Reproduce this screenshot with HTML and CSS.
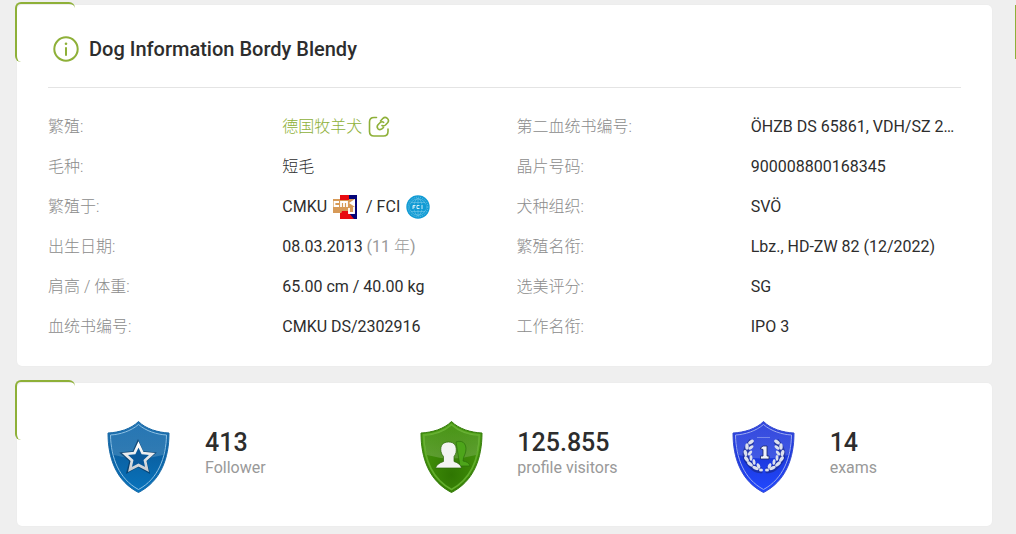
FILE: index.html
```html
<!DOCTYPE html>
<html lang="zh">
<head>
<meta charset="utf-8">
<meta name="viewport" content="width=device-width, initial-scale=1">
<title>Dog Information Bordy Blendy</title>
<link rel="stylesheet" href="styles.css">
</head>
<body>
<div class="page">
  <main class="main">
    <section class="card info">
      <header class="info-head">
        <svg class="info-icon" viewBox="0 0 26 26" aria-hidden="true">
          <circle cx="13" cy="13" r="11.7" fill="none" stroke="#8eb038" stroke-width="2"/>
          <circle cx="13" cy="7.8" r="1.3" fill="#8eb038"/>
          <path d="M13 12v7" stroke="#8eb038" stroke-width="2" stroke-linecap="round"/>
        </svg>
        <h1 class="title">Dog Information Bordy Blendy</h1>
      </header>
      <dl class="facts">
        <dt>繁殖:</dt>
        <dd><a class="breed" href="#breed">德国牧羊犬
          <svg class="link-icon" viewBox="0 0 22 22" fill="none" stroke="#8eb038" stroke-width="1.6" stroke-linecap="round" aria-hidden="true">
            <path d="M8.500 1.500H6Q1.500 1.500 1.500 6V15.500Q1.500 20 6 20H15.500Q20 20 20 15.500V13"/>
            <path d="M12.500 5L15 2.300Q17 .5 19.300 2.300Q21.500 4.500 19.600 6.800L17.500 9Q15.800 10.500 14 9.500"/>
            <path d="M15.700 6.300Q13.800 5 12 6.800L10 8.800Q8.300 11 10 12.800Q12 14.500 14.200 12.700L15.500 11.500"/>
          </svg></a></dd>
        <dt>第二血统书编号:</dt>
        <dd>ÖHZB DS 65861, VDH/SZ 2…</dd>
        <dt>毛种:</dt>
        <dd class="light">短毛</dd>
        <dt>晶片号码:</dt>
        <dd>900008800168345</dd>
        <dt>繁殖于:</dt>
        <dd class="clubs"><span>CMKU</span>
          <svg class="club-logo" viewBox="0 0 24 24" role="img" aria-label="CMKU">
            <path fill="#e80b10" d="M7 0H16V24H7z"/>
            <path fill="#050578" d="M16 0H24V24H20L16 19z"/>
            <path fill="#e80b10" d="M7 18H16L21 24H7z"/>
            <path fill="#d79a58" d="M0 4H22V18H0z"/>
            <path fill="#050578" d="M22 0H24V20H22z"/>
            <path fill="#fff" d="M22 4V12L16 8z"/>
            <path fill="none" stroke="#fff" stroke-width="1.800" d="M6 7H1.500V11H6M8 12V7H14V12M11 7V12M16 13V18H21V12"/>
            <path fill="#e80b10" d="M7 4H16V5H7zM9 16H15V19H8z"/>
          </svg>
          <span>/ FCI</span>
          <svg class="club-logo" viewBox="0 0 24 24" role="img" aria-label="FCI">
            <circle cx="12" cy="12" r="11.700" fill="#119bd4"/>
            <circle cx="12" cy="12" r="9.800" fill="none" stroke="#9bd7ee" stroke-width=".6" stroke-dasharray="1 1"/>
            <g fill="none" stroke="#76c8e8" stroke-width=".600">
              <ellipse cx="12" cy="12" rx="4" ry="8.500"/>
              <circle cx="12" cy="12" r="8.200"/>
              <path d="M12 3.500V20.500M5 7.500H19M5 16.500H19"/>
            </g>
            <path fill="#119bd4" d="M4 9.300H20V14.700H4z"/>
            <path fill="none" stroke="#e9f7fc" stroke-width=".9" d="M7 14V10.500H9.500M7 12H9M13.500 10.500H11V13.500H13.500M16 10V14"/>
          </svg></dd>
        <dt>犬种组织:</dt>
        <dd>SVÖ</dd>
        <dt>出生日期:</dt>
        <dd>08.03.2013 <span class="muted">(11 <span class="light">年</span>)</span></dd>
        <dt>繁殖名衔:</dt>
        <dd>Lbz., HD-ZW 82 (12/2022)</dd>
        <dt>肩高 / 体重:</dt>
        <dd>65.00 cm / 40.00 kg</dd>
        <dt>选美评分:</dt>
        <dd>SG</dd>
        <dt>血统书编号:</dt>
        <dd>CMKU DS/2302916</dd>
        <dt>工作名衔:</dt>
        <dd>IPO 3</dd>
      </dl>
    </section>

    <section class="card stats">
      <div class="stat">
        <svg class="shield" viewBox="0 0 64 72" aria-hidden="true">
          <defs>
            <linearGradient id="blue" x2="0" y2="1"><stop stop-color="#2374b3"/><stop offset=".5" stop-color="#0a62a4"/><stop offset="1" stop-color="#0874bd"/></linearGradient>
            <linearGradient id="gloss" x2="0" y2="1"><stop stop-color="#fff" stop-opacity=".03"/><stop offset="1" stop-color="#fff" stop-opacity=".17"/></linearGradient>
            <linearGradient id="silver" x2="0" y2="1"><stop stop-color="#fff"/><stop offset="1" stop-color="#c9cdd2"/></linearGradient>
            <path id="outline" d="M31.500 .5C24 8 12 11.500 1 12C1 37 9 60 31.500 71.500C54 60 62 37 62 12C51 11.500 39 8 31.500 .5Z"/>
            <path id="rim" d="M31.500 3.500C24 10 13 13.500 3.500 14C4 37 12 58 31.500 68.500C51 58 59 37 59.500 14C50 13.500 39 10 31.500 3.500Z"/>
            <path id="shine" d="M31.500 4C24 10 13 14 4 14.500Q4 25 7 34Q31 41 56 34Q59 25 59 14.500C50 14 39 10 31.500 4Z"/>
          </defs>
          <use href="#outline" fill="url(#blue)" stroke="#1869a7"/>
          <use href="#shine" fill="url(#gloss)"/>
          <use href="#rim" fill="none" stroke="#8fc1e3" stroke-width="1"/>
          <path d="M31 23L35 32 45 33 37.500 39.500 40 49 31 44 22 49 24.500 39.500 17 33 27 32Z" fill="#073d6b" stroke="#062c50" stroke-width="4" opacity=".6"/>
          <path d="M31.500 23.500L35.500 32 45 33 38 39.500 40 48.500 31.500 44 23 48.500 25 39.500 18 33 27.500 32Z" fill="#09589a" stroke="url(#silver)" stroke-width="2.700"/>
        </svg>
        <div class="stat-text">
          <strong class="value">413</strong>
          <span class="caption">Follower</span>
        </div>
      </div>
      <div class="stat">
        <svg class="shield" viewBox="0 0 64 72" aria-hidden="true">
          <defs>
            <radialGradient id="green" cy=".75" r=".75"><stop stop-color="#2f7602"/><stop offset=".55" stop-color="#3e8b08"/><stop offset="1" stop-color="#459411"/></radialGradient>
          </defs>
          <g transform="translate(1 0)">
            <use href="#outline" fill="url(#green)" stroke="#377e0d"/>
            <use href="#rim" fill="none" stroke="#61ad2b" stroke-width="1.800"/>
            <use href="#shine" fill="url(#gloss)"/>
            <path d="M36 21C44 18 48 25 45 33Q43 37 43 40Q49 41 50 45H40Z" fill="#4da51a" stroke="#2d700b" stroke-width=".7"/>
            <path d="M28.500 21C35 21 37 25.500 36 31.500Q35.500 33.500 34 35.500V40.500Q40.500 42.500 41.500 47H15.500Q17 42.500 23.500 40.500V35.500Q21.500 33.500 21 30.500C20 24.500 23 21 28.500 21Z" fill="#f3f4f2" stroke="#2d650c" stroke-width=".7"/>
          </g>
        </svg>
        <div class="stat-text">
          <strong class="value">125.855</strong>
          <span class="caption">profile visitors</span>
        </div>
      </div>
      <div class="stat">
        <svg class="shield" viewBox="0 0 64 72" aria-hidden="true">
          <defs>
            <linearGradient id="royal" x2="0" y2="1"><stop stop-color="#3145dd"/><stop offset=".5" stop-color="#1c39de"/><stop offset="1" stop-color="#2249ff"/></linearGradient>
            <g id="laurel">
              <path d="M20 20Q8 34 19 44Q24 50 30 49" fill="none" stroke="#152375" stroke-width="6" opacity=".55"/>
              <g fill="#dce1ee">
                <ellipse cx="19" cy="21" rx="3.200" ry="1.700" transform="rotate(-35 19 21)"/>
                <ellipse cx="15" cy="25.500" rx="1.700" ry="3.200"/>
                <ellipse cx="19" cy="26.500" rx="2.900" ry="1.500" transform="rotate(-35 19 26.500)"/>
                <ellipse cx="13.500" cy="32" rx="1.700" ry="3.200" transform="rotate(-15 13.500 32)"/>
                <ellipse cx="18" cy="32" rx="2.900" ry="1.500" transform="rotate(-50 18 32)"/>
                <ellipse cx="14.500" cy="38" rx="1.700" ry="3.200" transform="rotate(-35 14.500 38)"/>
                <ellipse cx="19" cy="37" rx="1.500" ry="2.900"/>
                <ellipse cx="18" cy="43" rx="1.700" ry="3.400" transform="rotate(-50 18 43)"/>
                <ellipse cx="22" cy="41" rx="1.500" ry="2.900" transform="rotate(-10 22 41)"/>
                <ellipse cx="23.500" cy="47" rx="3.400" ry="1.600" transform="rotate(25 23.500 47)"/>
                <ellipse cx="26.500" cy="45" rx="1.600" ry="2.900" transform="rotate(-25 26.500 45)"/>
                <ellipse cx="29" cy="49" rx="2" ry="1.500"/>
              </g>
            </g>
          </defs>
          <use href="#outline" fill="url(#royal)" stroke="#354bd0"/>
          <use href="#shine" fill="url(#gloss)"/>
          <use href="#rim" fill="none" stroke="#9caaf0" stroke-width="1"/>
          <use href="#laurel"/>
          <use href="#laurel" transform="translate(64 0) scale(-1 1)"/>
          <path d="M25 16.500H38" stroke="#8796ee" stroke-width=".8"/>
          <path d="M28 27.500L31 25H35V35H37V38H28.500V35H31V28.500Z" fill="#f0f2fa" stroke="#172365" stroke-width=".8"/>
        </svg>
        <div class="stat-text">
          <strong class="value">14</strong>
          <span class="caption">exams</span>
        </div>
      </div>
    </section>
  </main>
  <aside class="side"></aside>
</div>
</body>
</html>
```
FILE: styles.css
```css
* {
  box-sizing: border-box;
}

body {
  margin: 0;
  background: #efefef;
  color: #2d2d2d;
  font: 400 16px/24px Roboto, "Noto Sans CJK SC", sans-serif;
}

.page {
  display: flex;
  gap: 24px;
  padding: 5px 0 8px 17px;
  overflow: hidden;
}

.main {
  flex: 1;
  min-width: 0;
  display: grid;
  gap: 17px;
}

.card {
  position: relative;
  background: #fff;
  border-radius: 5px;
  box-shadow: 0 0 2px rgba(0, 0, 0, 0.04);
}

.card::before,
.side::before {
  content: "";
  position: absolute;
  top: -3px;
  left: -2px;
  width: 58px;
  height: 58px;
  border: solid #8eb038;
  border-width: 2px 0 0 2px;
  border-radius: 6px;
  pointer-events: none;
}

.side {
  position: relative;
  width: 0;
}

.side::before {
  top: 0;
  left: -1px;
  height: 54px;
  border-top: 0;
  border-radius: 0;
}

.info {
  padding: 31px 19px 27px;
}

.info-head {
  display: flex;
  align-items: center;
  gap: 10px;
  margin: 0 12px 27px;
  padding: 0 0 25px 5px;
  border-bottom: 1px solid #e4e4e4;
}

.info-icon {
  width: 26px;
  height: 26px;
}

.title {
  margin: 0;
  font-size: 20px;
  line-height: 26px;
  font-weight: 500;
}

.facts {
  display: grid;
  grid-template-columns: repeat(4, minmax(0, 1fr));
  row-gap: 16px;
  margin: 0;
}

.facts dt,
.facts dd {
  height: 24px;
  margin: 0;
  padding: 0 0 0 12px;
  overflow: hidden;
  white-space: nowrap;
  text-overflow: ellipsis;
}

.facts dt,
.muted,
.caption {
  color: #999;
}

.facts dt {
  color: #8c8c8c;
}

.facts dt,
.light,
.breed {
  font-weight: 300;
}

.facts .clubs,
.breed {
  display: flex;
  align-items: center;
  gap: 6px;
}

.club-logo {
  width: 24px;
  height: 24px;
}

.club-logo + span {
  margin-left: 3px;
}

.breed {
  color: #8eb038;
  text-decoration: none;
}

.link-icon {
  width: 22px;
  height: 22px;
}

.stats {
  display: grid;
  grid-template-columns: repeat(3, minmax(0, 1fr));
  padding: 38px 19px 33px;
}

.stat {
  display: flex;
  gap: 34px;
  padding-left: 71px;
}

.shield {
  flex: none;
  width: 64px;
  height: 72px;
}

.stat-text {
  display: flex;
  flex-direction: column;
  padding-top: 7px;
}

.value {
  font-size: 25px;
  line-height: 30px;
  font-weight: 500;
}

.caption {
  line-height: 20px;
}
```
